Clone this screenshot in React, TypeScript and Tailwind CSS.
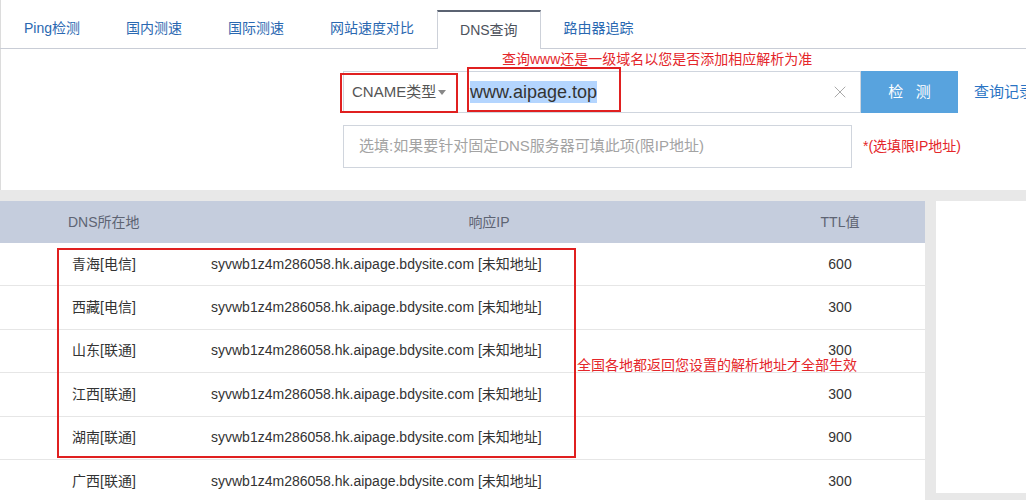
import { X } from 'lucide-react';

const TABS = ['Ping检测', '国内测速', '国际测速', '网站速度对比', 'DNS查询', '路由器追踪'];

const ROWS = [
   { loc: '青海[电信]', ttl: '600' },
   { loc: '西藏[电信]', ttl: '300' },
   { loc: '山东[联通]', ttl: '300' },
   { loc: '江西[联通]', ttl: '300' },
   { loc: '湖南[联通]', ttl: '900' },
   { loc: '广西[联通]', ttl: '300' },
];

const HOST = 'syvwb1z4m286058.hk.aipage.bdysite.com [未知地址]';

export default function App() {
   return (
      <div className="h-[500px] w-[1026px] overflow-hidden bg-[#e8e8e8] font-['Liberation_Sans','Noto_Sans_CJK_SC',sans-serif] text-[14px]">
         {/* Top panel: tabs + query form */}
         <div className="relative h-[190px] bg-white shadow-[inset_1px_0_0_#dcdcdc]">
            <div className="flex h-[49px] items-end border-b border-[#c9cdd6] pl-px">
               {TABS.map((t) =>
                  t === 'DNS查询' ? (
                     <div key={t} className="-mb-px flex h-[39px] items-center border-x border-t-2 border-[#cdd1d9] border-t-[#5b6372] bg-white px-[22px] text-[#4d525c]">
                        {t}
                     </div>
                  ) : (
                     <div key={t} className="flex h-[39px] items-center border-x border-transparent px-[22px] text-[#2a68b1]">
                        {t}
                     </div>
                  )
               )}
            </div>

            <div className="pt-[22px]">
               <div className="flex h-[42px] pl-[343px]">
                  <div className="flex w-[518px] shrink-0 border border-[#cfd5de]">
                     <div className="flex w-[117px] items-center pl-[8px] text-[15px] text-[#555]">
                        CNAME类型
                        <svg width="8" height="5" viewBox="0 0 8 5" className="ml-[2px]">
                           <path d="M0 0h8L4 5z" fill="#888" />
                        </svg>
                     </div>
                     <div className="flex flex-1 items-center pl-[9px]">
                        <span className="bg-[#b4d5fe] text-[18px] leading-[22px] text-[#333]">www.aipage.top</span>
                     </div>
                     <div className="flex items-center pr-[10px]">
                        <X size={20} strokeWidth={1.2} className="text-[#aaa]" />
                     </div>
                  </div>
                  <div className="flex w-[97px] shrink-0 items-center justify-center bg-[#58a3de] text-[15px] text-white">检&nbsp;&nbsp;&nbsp;测</div>
                  <div className="ml-[16px] flex shrink-0 items-center whitespace-nowrap text-[15px] text-[#2a74c4]">查询记录</div>
               </div>

               <div className="mt-[12px] flex items-center pl-[343px]">
                  <div className="flex h-[43px] w-[509px] shrink-0 items-center border border-[#d0d5dd] pl-[15px] text-[15px] text-[#a3a3a3]">
                     选填:如果要针对固定DNS服务器可填此项(限IP地址)
                  </div>
                  <div className="ml-[11px] whitespace-nowrap text-[14px] text-[#e4262a]">*(选填限IP地址)</div>
               </div>
            </div>

            {/* annotations */}
            <div className="absolute left-[502px] top-[51px] whitespace-nowrap text-[14px] leading-[16px] text-[#e4262a]">查询www还是一级域名以您是否添加相应解析为准</div>
            <div className="absolute left-[340px] top-[73px] h-[40px] w-[118px] border-2 border-[#e02020]" />
            <div className="absolute left-[467px] top-[67px] h-[45px] w-[154px] border-2 border-[#e02020]" />
         </div>

         {/* Results */}
         <div className="mt-[11px] flex">
            <div className="relative w-[925px] shrink-0">
               <div className="flex h-[42px] items-center bg-[#c5cddd] text-[#5e6473]">
                  <div className="w-[211px] shrink-0 pl-[68px]">DNS所在地</div>
                  <div className="flex-1 pl-[12px] text-center">响应IP</div>
                  <div className="w-[170px] shrink-0 text-center">TTL值</div>
               </div>
               <div className="relative">
                  {ROWS.map((r) => (
                     <div key={r.loc} className="flex h-[43.4px] items-center border-b border-[#e6e6e6] bg-white text-[#333]">
                        <div className="w-[211px] shrink-0 pl-[72px]">{r.loc}</div>
                        <div className="flex-1 whitespace-nowrap">{HOST}</div>
                        <div className="w-[170px] shrink-0 text-center">{r.ttl}</div>
                     </div>
                  ))}
                  <div className="absolute left-[57px] top-[5px] h-[210px] w-[519px] border-2 border-[#e02020]" />
                  <div className="absolute left-[577px] top-[114px] whitespace-nowrap text-[14px] leading-[16px] text-[#e4262a]">全国各地都返回您设置的解析地址才全部生效</div>
               </div>
            </div>
            <div className="ml-[11px] h-[292px] flex-1 bg-white" />
         </div>
      </div>
   );
}
